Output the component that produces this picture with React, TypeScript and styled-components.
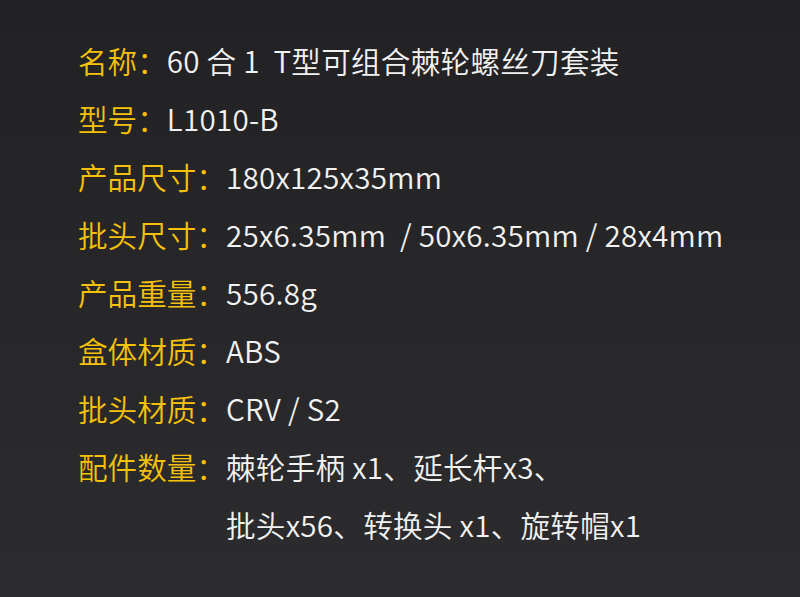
import React from 'react'
import styled, { createGlobalStyle } from 'styled-components'

const Global = createGlobalStyle`
    html, body { margin: 0; padding: 0; }
    body {
        background: #232325;
        font-family: "Noto Sans CJK SC", "Noto Sans", sans-serif;
    }
`

const Page = styled.div`
    width: 800px;
    height: 597px;
    box-sizing: border-box;
    padding: 32px 0 0 78px;
    background: linear-gradient(180deg, #222224 0%, #2c2c2e 100%);
    overflow: hidden;
`

const Row = styled.div`
    display: flex;
    align-items: flex-start;
    font-size: 29.6px;
    font-weight: 350;
    line-height: 58px;
    white-space: pre;
`

const Label = styled.span`
    color: #f5c10a;
`

const Value = styled.div`
    color: #f2f2f2;
    display: flex;
    flex-direction: column;
    letter-spacing: 0.25px;
`

const specs: { label: string; value: string[] }[] = [
    { label: '名称：', value: ['60 合 1  T型可组合棘轮螺丝刀套装'] },
    { label: '型号：', value: ['L1010-B'] },
    { label: '产品尺寸：', value: ['180x125x35mm'] },
    { label: '批头尺寸：', value: ['25x6.35mm  / 50x6.35mm / 28x4mm'] },
    { label: '产品重量：', value: ['556.8g'] },
    { label: '盒体材质：', value: ['ABS'] },
    { label: '批头材质：', value: ['CRV / S2'] },
    { label: '配件数量：', value: ['棘轮手柄 x1、延长杆x3、', '批头x56、转换头 x1、旋转帽x1'] },
]

const App: React.FC = () => (
    <>
        <Global />
        <Page>
            {specs.map(s => (
                <Row key={s.label}>
                    <Label>{s.label}</Label>
                    <Value>
                        {s.value.map(line => <span key={line}>{line}</span>)}
                    </Value>
                </Row>
            ))}
        </Page>
    </>
)

export default App
